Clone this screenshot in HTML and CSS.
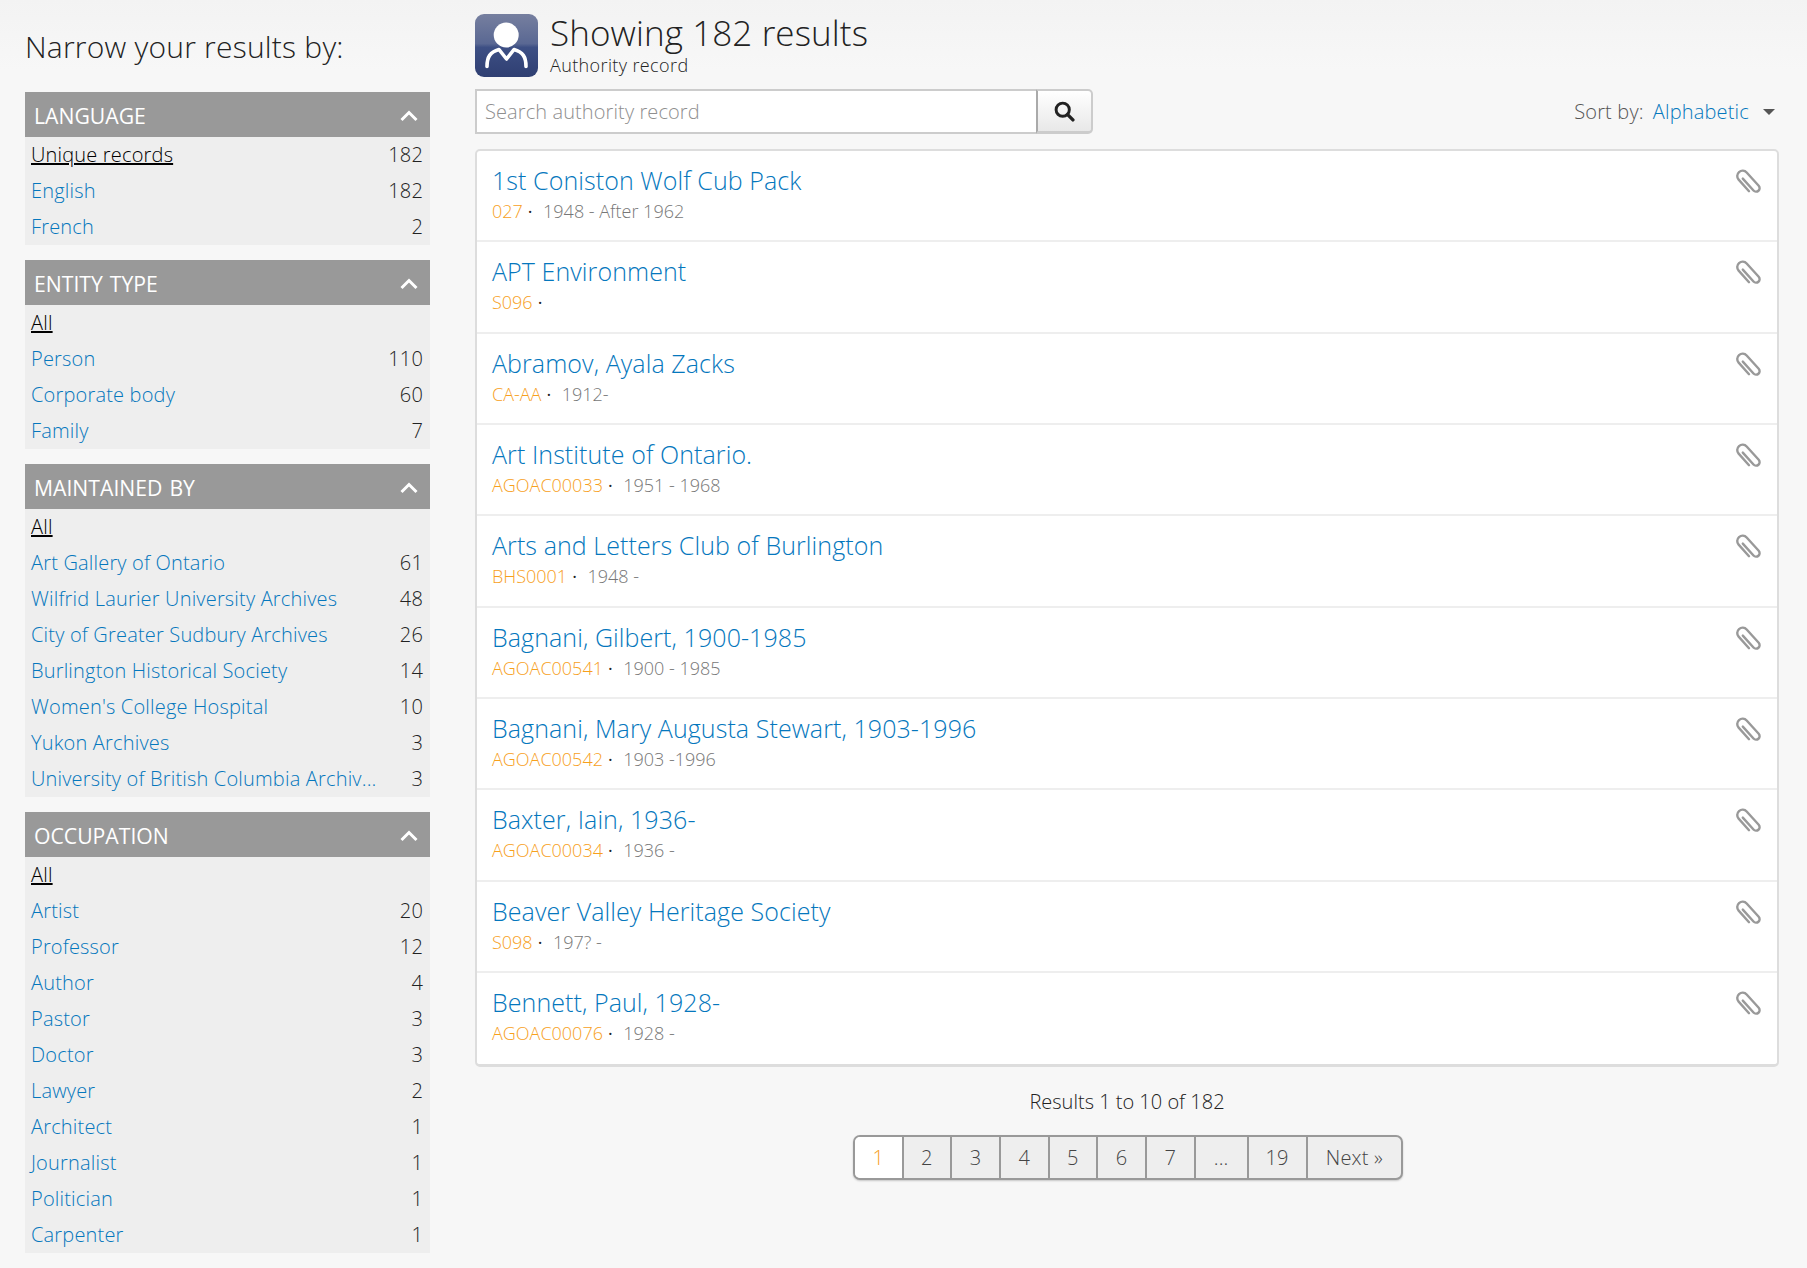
FILE: index.html
```html
<!DOCTYPE html>
<html lang="en">
<head>
<meta charset="utf-8">
<title>Authority record</title>
<link rel="stylesheet" href="styles.css">
</head>
<body>
<svg class="defs" width="0" height="0" aria-hidden="true">
  <defs>
    <symbol id="chev" viewBox="0 0 18 12"><path d="M1.5 10 L9 2.5 L16.5 10" fill="none" stroke="#fff" stroke-width="3"/></symbol>
    <symbol id="clip" viewBox="0 0 28 30">
      <g transform="rotate(-42 14 15)" fill="none" stroke="#999" stroke-width="2.4" stroke-linecap="round">
        <path d="M8.6 22.5 V7 a5.4 5.4 0 0 1 10.8 0 V25 a3.5 3.5 0 0 1 -7 0 V9"/>
      </g>
    </symbol>
  </defs>
</svg>
<div class="page">
  <aside class="sidebar">
    <h2 class="narrow">Narrow your results by:</h2>

    <section class="facet">
      <h3 class="facet-head">LANGUAGE<svg class="chev"><use href="#chev"/></svg></h3>
      <ul class="facet-list">
        <li class="active"><a>Unique records</a><span>182</span></li>
        <li><a>English</a><span>182</span></li>
        <li><a>French</a><span>2</span></li>
      </ul>
    </section>

    <section class="facet">
      <h3 class="facet-head">ENTITY TYPE<svg class="chev"><use href="#chev"/></svg></h3>
      <ul class="facet-list">
        <li class="active"><a>All</a></li>
        <li><a>Person</a><span>110</span></li>
        <li><a>Corporate body</a><span>60</span></li>
        <li><a>Family</a><span>7</span></li>
      </ul>
    </section>

    <section class="facet">
      <h3 class="facet-head">MAINTAINED BY<svg class="chev"><use href="#chev"/></svg></h3>
      <ul class="facet-list">
        <li class="active"><a>All</a></li>
        <li><a>Art Gallery of Ontario</a><span>61</span></li>
        <li><a>Wilfrid Laurier University Archives</a><span>48</span></li>
        <li><a>City of Greater Sudbury Archives</a><span>26</span></li>
        <li><a>Burlington Historical Society</a><span>14</span></li>
        <li><a>Women's College Hospital</a><span>10</span></li>
        <li><a>Yukon Archives</a><span>3</span></li>
        <li><a>University of British Columbia Archiv...</a><span>3</span></li>
      </ul>
    </section>

    <section class="facet">
      <h3 class="facet-head">OCCUPATION<svg class="chev"><use href="#chev"/></svg></h3>
      <ul class="facet-list">
        <li class="active"><a>All</a></li>
        <li><a>Artist</a><span>20</span></li>
        <li><a>Professor</a><span>12</span></li>
        <li><a>Author</a><span>4</span></li>
        <li><a>Pastor</a><span>3</span></li>
        <li><a>Doctor</a><span>3</span></li>
        <li><a>Lawyer</a><span>2</span></li>
        <li><a>Architect</a><span>1</span></li>
        <li><a>Journalist</a><span>1</span></li>
        <li><a>Politician</a><span>1</span></li>
        <li><a>Carpenter</a><span>1</span></li>
      </ul>
    </section>
  </aside>

  <main class="main">
    <header class="head">
      <svg class="head-icon" viewBox="0 0 63 63">
        <defs>
          <linearGradient id="tile" x1="0" y1="0" x2="0" y2="1">
            <stop offset="0" stop-color="#767f9f"/>
            <stop offset="0.47" stop-color="#5a6893"/>
            <stop offset="0.53" stop-color="#3d4f84"/>
            <stop offset="1" stop-color="#2f3f72"/>
          </linearGradient>
        </defs>
        <rect width="63" height="63" rx="9" fill="url(#tile)"/>
        <ellipse cx="31.2" cy="21" rx="12.5" ry="12.5" fill="#fff"/>
        <path d="M12 52.5 C12 43 15 38 24 35.5 L31.5 45 L39 35.5 C48 38 51 43 51 52.5" fill="none" stroke="#fff" stroke-width="3.6" stroke-linecap="round" stroke-linejoin="round"/>
      </svg>
      <div class="head-text">
        <h1>Showing 182 results</h1>
        <p>Authority record</p>
      </div>
    </header>

    <div class="toolbar">
      <form class="search">
        <input class="search-input" type="text" placeholder="Search authority record">
        <button class="search-btn" type="button" aria-label="Search">
          <svg viewBox="0 0 20 20" width="21" height="21"><circle cx="8.3" cy="8.3" r="6.3" fill="none" stroke="#222" stroke-width="2.8"/><path d="M13 13 L18 18" stroke="#222" stroke-width="3.2" stroke-linecap="round"/></svg>
        </button>
      </form>
      <div class="sort">
        <span class="sort-label">Sort by:</span>
        <a class="sort-value">Alphabetic</a>
        <span class="caret"></span>
      </div>
    </div>

    <div class="results">
      <article class="row"><div><a class="name">1st Coniston Wolf Cub Pack</a><p class="meta"><span class="code">027</span><span class="dot">·</span><span class="dates">1948 - After 1962</span></p></div><svg class="clip"><use href="#clip"/></svg></article>
      <article class="row"><div><a class="name">APT Environment</a><p class="meta"><span class="code">S096</span><span class="dot">·</span></p></div><svg class="clip"><use href="#clip"/></svg></article>
      <article class="row"><div><a class="name">Abramov, Ayala Zacks</a><p class="meta"><span class="code">CA-AA</span><span class="dot">·</span><span class="dates">1912-</span></p></div><svg class="clip"><use href="#clip"/></svg></article>
      <article class="row"><div><a class="name">Art Institute of Ontario.</a><p class="meta"><span class="code">AGOAC00033</span><span class="dot">·</span><span class="dates">1951 - 1968</span></p></div><svg class="clip"><use href="#clip"/></svg></article>
      <article class="row"><div><a class="name">Arts and Letters Club of Burlington</a><p class="meta"><span class="code">BHS0001</span><span class="dot">·</span><span class="dates">1948 -</span></p></div><svg class="clip"><use href="#clip"/></svg></article>
      <article class="row"><div><a class="name">Bagnani, Gilbert, 1900-1985</a><p class="meta"><span class="code">AGOAC00541</span><span class="dot">·</span><span class="dates">1900 - 1985</span></p></div><svg class="clip"><use href="#clip"/></svg></article>
      <article class="row"><div><a class="name">Bagnani, Mary Augusta Stewart, 1903-1996</a><p class="meta"><span class="code">AGOAC00542</span><span class="dot">·</span><span class="dates">1903 -1996</span></p></div><svg class="clip"><use href="#clip"/></svg></article>
      <article class="row"><div><a class="name">Baxter, Iain, 1936-</a><p class="meta"><span class="code">AGOAC00034</span><span class="dot">·</span><span class="dates">1936 -</span></p></div><svg class="clip"><use href="#clip"/></svg></article>
      <article class="row"><div><a class="name">Beaver Valley Heritage Society</a><p class="meta"><span class="code">S098</span><span class="dot">·</span><span class="dates">197? -</span></p></div><svg class="clip"><use href="#clip"/></svg></article>
      <article class="row"><div><a class="name">Bennett, Paul, 1928-</a><p class="meta"><span class="code">AGOAC00076</span><span class="dot">·</span><span class="dates">1928 -</span></p></div><svg class="clip"><use href="#clip"/></svg></article>
    </div>

    <p class="count">Results 1 to 10 of 182</p>
    <nav class="pager">
      <span class="pg current w48">1</span>
      <a class="pg w49">2</a>
      <a class="pg w49">3</a>
      <a class="pg w49">4</a>
      <a class="pg w49">5</a>
      <a class="pg w49">6</a>
      <a class="pg w49">7</a>
      <span class="pg w53">...</span>
      <a class="pg w59">19</a>
      <a class="pg w97">Next »</a>
    </nav>
  </main>
</div>
</body>
</html>
```

FILE: styles.css
```css
* { box-sizing: border-box; }
html, body { margin: 0; padding: 0; }
body {
  background: linear-gradient(#f3f3f3 0, #f7f7f7 70px) #f7f7f7;
  font-family: "Open Sans", sans-serif;
  font-weight: 300;
  letter-spacing: 0.18px;
  color: #222;
  font-size: 20px;
  min-height: 1268px;
  overflow: hidden;
}
.defs { position: absolute; }
ul { list-style: none; margin: 0; padding: 0; }
a { color: #0577bd; text-decoration: none; }
h1, h2, h3, p { margin: 0; font-weight: 300; }

.page { display: flex; padding: 0 28px 15px 25px; align-items: flex-start; }

.sidebar { width: 405px; flex: none; }
.narrow { height: 92px; padding-top: 26px; font-size: 30px; line-height: 41px; letter-spacing: 0.22px; color: #222; }

.facet { margin-bottom: 15px; }
.facet:last-child { margin-bottom: 0; }
.facet-head {
  display: flex; align-items: center; justify-content: space-between;
  height: 45px; padding: 2px 12px 0 9px;
  background: #999; color: #fff;
  font-size: 21.2px; font-weight: 400; word-spacing: 1.5px; letter-spacing: 0;
}
.chev { width: 18px; height: 12px; }
.facet-list { background: #eee; }
.facet-list li {
  display: flex; justify-content: space-between; align-items: center;
  height: 36px; padding: 0 7px 1px 6px; line-height: 35px;
}
.facet-list .active a { color: #000; text-decoration: underline; }
.facet-list span { color: #222; }

.main { width: 1304px; margin-left: 45px; flex: none; }

.head { display: flex; padding-top: 14px; gap: 12px; }
.head-icon { width: 63px; height: 63px; flex: none; }
.head-text h1 { font-size: 35px; line-height: 38px; letter-spacing: 0.1px; color: #222; }
.head-text p { font-size: 18px; line-height: 26px; letter-spacing: 0.38px; }

.toolbar { display: flex; justify-content: space-between; align-items: center; margin-top: 11px; height: 45px; }
.search { display: flex; width: 618px; height: 45px; }
.search-input {
  flex: 1; min-width: 0; height: 45px;
  border: 2px solid #ccc; border-right: 0; background: #fff;
  padding: 0 8px; outline: 0;
  font: 300 20px "Open Sans", sans-serif; letter-spacing: 0.1px; color: #333;
}
.search-input::placeholder { color: #8f8f8f; opacity: 1; }
.search-btn {
  width: 57px; height: 45px; padding: 0;
  display: flex; align-items: center; justify-content: center;
  border: 2px solid #ccc; border-bottom-width: 3px; border-left-color: #aaa;
  border-radius: 0 5px 5px 0;
  background: linear-gradient(#fff, #e8e8e8);
}
.sort { display: flex; align-items: center; padding-right: 4px; }
.sort-label { color: #555; }
.sort-value { margin-left: 9px; }
.caret {
  margin-left: 14px; width: 0; height: 0;
  border-left: 6px solid transparent; border-right: 6px solid transparent;
  border-top: 6px solid #555;
}

.results {
  margin-top: 15px;
  background: #fff;
  border: 2px solid #ddd; border-bottom-width: 3px;
  border-radius: 5px;
}
.row {
  display: flex; justify-content: space-between;
  height: 91.35px; padding: 13px 15px 0 15px;
  border-bottom: 2px solid #eee;
}
.row:last-child { border-bottom: 0; }
.name { font-size: 25px; line-height: 33px; letter-spacing: 0.08px; }
.meta { font-size: 18px; line-height: 26px; margin-top: 1px; display: flex; letter-spacing: 0; }
.code { color: #f7a01c; }
.dot { margin: 0 10.5px 0 5px; color: #222; font-weight: 400; }
.dates { color: #777; }
.clip { width: 28px; height: 30px; margin-top: 3px; flex: none; }

.count { text-align: center; margin-top: 21px; line-height: 28px; letter-spacing: 0; }
.pager {
  display: flex; width: 550px; height: 45px; margin: 19px 0 0 378px;
  border: 2px solid #999; border-radius: 7px; overflow: hidden;
  box-shadow: 0 1px 2px rgba(0,0,0,.2);
  background: #eee;
}
.pg {
  display: flex; align-items: center; justify-content: center;
  height: 100%; color: #444; border-left: 2px solid #999;
}
.pg:first-child { border-left: 0; }
.current { background: #fff; color: #f7a01c; }
.w48 { width: 46.5px; }
.w49 { width: 48.7px; }
.w53 { width: 53px; }
.w59 { width: 59px; }
.w97 { flex: 1; }
```
